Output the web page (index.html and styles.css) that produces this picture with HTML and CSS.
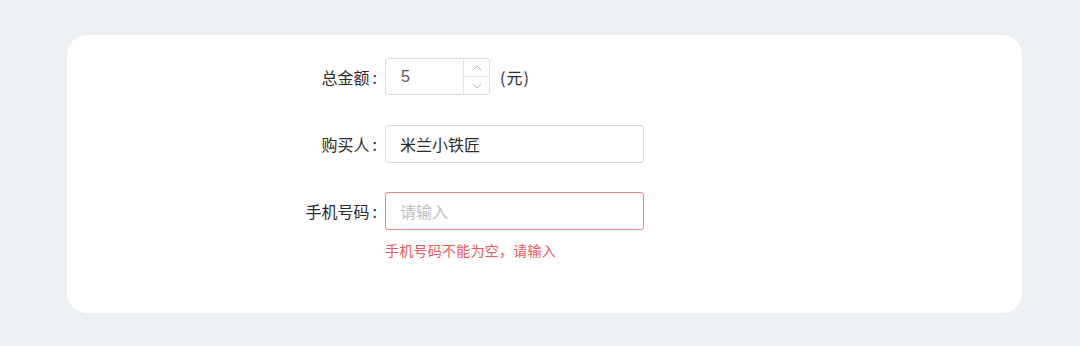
FILE: index.html
```html
<!DOCTYPE html>
<html lang="zh-CN">
<head>
<meta charset="utf-8">
<link rel="stylesheet" href="styles.css">
</head>
<body>
<div class="card">
  <div class="row">
    <label class="label">总金额<span class="colon">:</span></label>
    <div class="number">
      <span class="num-value">5</span>
      <div class="spin">
        <span class="spin-btn"><svg width="10" height="6" viewBox="0 0 10 6"><path d="M1 5 L5 1 L9 5" fill="none" stroke="#b5b5b5" stroke-width="1"/></svg></span>
        <span class="spin-btn"><svg width="10" height="6" viewBox="0 0 10 6"><path d="M1 1 L5 5 L9 1" fill="none" stroke="#b5b5b5" stroke-width="1"/></svg></span>
      </div>
    </div>
    <span class="unit">(元)</span>
  </div>
  <div class="row">
    <label class="label">购买人<span class="colon">:</span></label>
    <div class="input">米兰小铁匠</div>
  </div>
  <div class="row row-error">
    <label class="label">手机号码<span class="colon">:</span></label>
    <div class="input input-error placeholder">请输入</div>
  </div>
  <div class="error-msg">手机号码不能为空，请输入</div>
</div>
</body>
</html>
```

FILE: styles.css
```css
html, body {
  margin: 0;
  padding: 0;
}
body {
  background: #edf0f3;
  width: 1080px;
  height: 346px;
  font-family: "Noto Sans CJK SC", "Noto Sans", sans-serif;
  color: #333;
  padding-top: 35px;
  box-sizing: border-box;
}
.card {
  margin-left: 67px;
  width: 955px;
  height: 278px;
  background: #fff;
  border-radius: 20px;
  box-sizing: border-box;
  padding-top: 23px;
}
.row {
  display: flex;
  align-items: center;
  height: 38px;
  margin-bottom: 29px;
}
.row:first-child {
  height: 37px;
  margin-bottom: 30px;
}
.row-error {
  margin-bottom: 0;
}
.label {
  width: 318px;
  text-align: right;
  font-size: 16px;
  padding-right: 8px;
  box-sizing: border-box;
  color: #2b2b2b;
}
.colon {
  margin-left: 3px;
}
.number {
  width: 105px;
  height: 37px;
  border: 1px solid #dcdcdc;
  border-radius: 3px;
  box-sizing: border-box;
  display: flex;
}
.num-value {
  flex: 1;
  padding-left: 15px;
  font-size: 16px;
  line-height: 35px;
  color: #555;
  font-family: "Liberation Sans", sans-serif;
}
.spin {
  width: 25px;
  border-left: 1px solid #e3e3e3;
  display: flex;
  flex-direction: column;
}
.spin-btn {
  flex: 1;
  display: flex;
  align-items: center;
  justify-content: center;
}
.spin-btn + .spin-btn {
  border-top: 1px solid #e3e3e3;
}
.unit {
  margin-left: 10px;
  font-size: 16px;
  letter-spacing: 1px;
  color: #2b2b2b;
}
.input {
  width: 259px;
  height: 38px;
  border: 1px solid #d9d9d9;
  border-radius: 3px;
  box-sizing: border-box;
  padding-left: 14px;
  font-size: 16px;
  line-height: 36px;
  color: #2b2b2b;
}
.input-error {
  border-color: #e58585;
}
.placeholder {
  color: #bdbdbd;
}
.error-msg {
  margin-left: 318px;
  margin-top: 10px;
  font-size: 14px;
  letter-spacing: 0.25px;
  line-height: 20px;
  color: #e45a5a;
}
```
